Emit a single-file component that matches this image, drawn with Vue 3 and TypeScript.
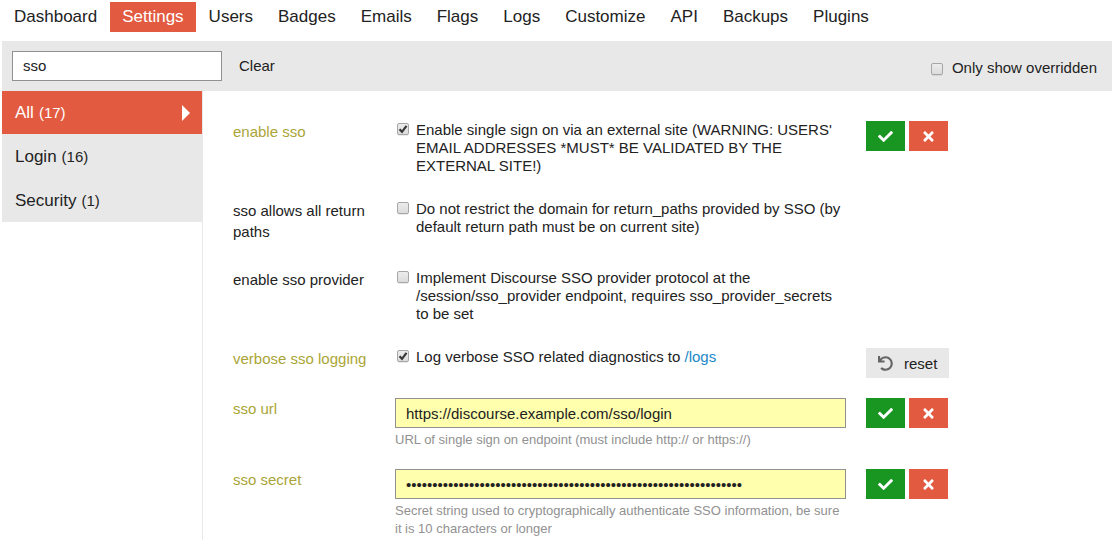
<script setup lang="ts">
import { computed, ref } from 'vue'

interface Setting {
  id: string
  label: string
  kind: 'bool' | 'text' | 'password'
  value: string | boolean
  description: string
  link?: string
  overridden: boolean
  action?: 'confirm' | 'reset'
}

const tabs = ['Dashboard', 'Settings', 'Users', 'Badges', 'Emails', 'Flags', 'Logs', 'Customize', 'API', 'Backups', 'Plugins']
const activeTab = ref('Settings')

const categories = [
  { name: 'All', count: 17 },
  { name: 'Login', count: 16 },
  { name: 'Security', count: 1 },
]
const activeCategory = ref('All')

const filter = ref('sso')
const onlyOverridden = ref(false)

const settings = ref<Setting[]>([
  {
    id: 'enable_sso',
    label: 'enable sso',
    kind: 'bool',
    value: true,
    description: "Enable single sign on via an external site (WARNING: USERS' EMAIL ADDRESSES *MUST* BE VALIDATED BY THE EXTERNAL SITE!)",
    overridden: true,
    action: 'confirm',
  },
  {
    id: 'sso_allows_all_return_paths',
    label: 'sso allows all return paths',
    kind: 'bool',
    value: false,
    description: 'Do not restrict the domain for return_paths provided by SSO (by default return path must be on current site)',
    overridden: false,
  },
  {
    id: 'enable_sso_provider',
    label: 'enable sso provider',
    kind: 'bool',
    value: false,
    description: 'Implement Discourse SSO provider protocol at the /session/sso_provider endpoint, requires sso_provider_secrets to be set',
    overridden: false,
  },
  {
    id: 'verbose_sso_logging',
    label: 'verbose sso logging',
    kind: 'bool',
    value: true,
    description: 'Log verbose SSO related diagnostics to ',
    link: '/logs',
    overridden: true,
    action: 'reset',
  },
  {
    id: 'sso_url',
    label: 'sso url',
    kind: 'text',
    value: 'https://discourse.example.com/sso/login',
    description: 'URL of single sign on endpoint (must include http:// or https://)',
    overridden: true,
    action: 'confirm',
  },
  {
    id: 'sso_secret',
    label: 'sso secret',
    kind: 'password',
    value: '0'.repeat(64),
    description: 'Secret string used to cryptographically authenticate SSO information, be sure it is 10 characters or longer',
    overridden: true,
    action: 'confirm',
  },
])

const visible = computed(() => settings.value.filter((s) => !onlyOverridden.value || s.overridden))
</script>

<template>
  <div class="admin">
    <nav class="tabs">
      <a v-for="tab in tabs" :key="tab" href="#" :class="{ active: tab === activeTab }" @click.prevent="activeTab = tab">{{ tab }}</a>
    </nav>

    <div class="filter-bar">
      <input v-model="filter" class="text-input search" type="text" aria-label="Filter settings" />
      <button class="clear" type="button" @click="filter = ''">Clear</button>
      <label class="overridden-toggle">
        <input v-model="onlyOverridden" class="check" type="checkbox" />
        <span>Only show overridden</span>
      </label>
    </div>

    <div class="body">
      <aside class="sidebar">
        <ul>
          <li v-for="c in categories" :key="c.name">
            <a href="#" :class="{ active: c.name === activeCategory }" @click.prevent="activeCategory = c.name">
              {{ c.name }} <span class="count">({{ c.count }})</span>
            </a>
          </li>
        </ul>
      </aside>

      <main class="settings">
        <section v-for="s in visible" :key="s.id" class="setting" :class="{ changed: s.overridden }">
          <label class="name" :for="s.id">{{ s.label }}</label>

          <div v-if="s.kind === 'bool'" class="value bool-value">
            <input :id="s.id" v-model="s.value" class="check" type="checkbox" />
            <p>{{ s.description }}<a v-if="s.link" :href="s.link">{{ s.link }}</a></p>
          </div>
          <div v-else class="value">
            <input :id="s.id" v-model="s.value" class="text-input" :type="s.kind" autocomplete="off" />
            <p class="hint">{{ s.description }}</p>
          </div>

          <div class="actions">
            <template v-if="s.action === 'confirm'">
              <button class="btn ok" type="button" aria-label="Save">
                <svg viewBox="0 0 512 512" aria-hidden="true"><path d="M173.898 439.404l-166.400-166.400c-9.997-9.997-9.997-26.206 0-36.204l36.203-36.204c9.997-9.998 26.207-9.998 36.204 0L192 312.690 432.095 72.596c9.997-9.997 26.207-9.997 36.204 0l36.203 36.204c9.997 9.997 9.997 26.206 0 36.204l-294.400 294.401c-9.998 9.997-26.207 9.997-36.204-.001z" /></svg>
              </button>
              <button class="btn cancel" type="button" aria-label="Cancel">
                <svg viewBox="-80 0 512 512" aria-hidden="true"><path d="M242.720 256l100.070-100.070c12.280-12.280 12.280-32.190 0-44.480l-22.240-22.240c-12.280-12.280-32.190-12.280-44.480 0L176 189.280 75.930 89.210c-12.280-12.280-32.190-12.280-44.480 0L9.210 111.450c-12.280 12.280-12.280 32.190 0 44.480L109.280 256 9.210 356.070c-12.280 12.280-12.280 32.190 0 44.480l22.240 22.240c12.280 12.280 32.200 12.280 44.480 0L176 322.720l100.070 100.070c12.280 12.280 32.200 12.280 44.480 0l22.240-22.240c12.280-12.280 12.280-32.190 0-44.480L242.720 256z" /></svg>
              </button>
            </template>
            <button v-else-if="s.action === 'reset'" class="btn reset" type="button">
              <svg viewBox="0 0 512 512" aria-hidden="true"><path d="M212.333 224.333H12c-6.627 0-12-5.373-12-12V12C0 5.373 5.373 0 12 0h48c6.627 0 12 5.373 12 12v78.112C117.773 39.279 184.260 7.470 258.175 8.007c136.906.994 246.448 111.623 246.157 248.532C504.041 393.258 393.120 504 256.333 504c-64.089 0-122.496-24.313-166.510-64.215-5.099-4.622-5.334-12.554-.467-17.420l33.967-33.967c4.474-4.474 11.662-4.717 16.401-.525C170.760 415.336 211.580 432 256.333 432c97.268 0 176-78.716 176-176 0-97.267-78.716-176-176-176-58.496 0-110.280 28.476-142.274 72.333h98.274c6.627 0 12 5.373 12 12v48c0 6.627-5.373 12-12 12z" /></svg>
              <span>reset</span>
            </button>
          </div>
        </section>
      </main>
    </div>
  </div>
</template>

<style>
body {
  background: #fff;
}
</style>

<style scoped>
.admin {
  box-sizing: border-box;
  display: flex;
  flex-direction: column;
  height: 100vh;
  overflow: hidden;
  padding: 2px 2px 0;
  color: #222;
  font-family: "Liberation Sans", Arial, sans-serif;
  font-size: 15px;
  line-height: 18px;
}

.tabs {
  display: flex;
  gap: 1px;
  margin-bottom: 9px;
}

.tabs a {
  padding: 0 12px;
  color: #222;
  font-size: 17px;
  line-height: 30px;
  text-decoration: none;
}

.tabs a.active {
  background: #e25a40;
  color: #fff;
}

.filter-bar {
  display: flex;
  align-items: center;
  padding: 10px 15px 10px 10px;
  background: #e8e8e8;
}

.text-input {
  box-sizing: border-box;
  display: block;
  width: 100%;
  height: 30px;
  margin: 0;
  padding: 0 10px;
  border: 1px solid #919191;
  border-radius: 0;
  background: #fff;
  color: #222;
  font: inherit;
}

.search {
  width: 210px;
  padding-bottom: 2px;
}

.clear {
  margin-left: 17px;
  padding: 0;
  border: 0;
  background: none;
  color: #222;
  font: inherit;
}

.overridden-toggle {
  display: flex;
  align-items: center;
  gap: 9px;
  margin-left: auto;
  padding-top: 4px;
}

.overridden-toggle .check {
  margin-top: 2px;
}

.check {
  appearance: none;
  flex: none;
  box-sizing: border-box;
  width: 12px;
  height: 12px;
  margin: 0;
  border: 1px solid #a6a6a6;
  border-radius: 2px;
  background: linear-gradient(#ececec, #dcdcdc);
  box-shadow: 0 1px 0 rgba(0, 0, 0, 0.08);
}

.check:checked {
  background: url("data:image/svg+xml,%3Csvg xmlns='http://www.w3.org/2000/svg' viewBox='0 0 10 10'%3E%3Cpath d='M1.500 5.300 4 7.800 8.500 1.800' fill='none' stroke='%23383838' stroke-width='2.200'/%3E%3C/svg%3E") center / 10px 10px no-repeat, linear-gradient(#ececec, #dcdcdc);
}

.body {
  display: flex;
  flex: 1;
  min-height: 0;
}

.sidebar {
  flex: none;
  width: 200px;
  border-right: 1px solid #e8e8e8;
}

.sidebar ul {
  margin: 0;
  padding: 0;
  background: #e8e8e8;
  list-style: none;
}

.sidebar li + li {
  border-top: 1px solid #e8e8e8;
}

.sidebar a {
  display: flex;
  align-items: baseline;
  gap: 5px;
  padding: 0 12px 0 13px;
  color: #222;
  font-size: 17px;
  line-height: 43px;
  text-decoration: none;
}

.sidebar .count {
  font-size: 15px;
}

.sidebar a.active {
  background: #e25a40;
  color: #fff;
}

.sidebar a.active::after {
  content: "";
  align-self: center;
  margin-left: auto;
  border: 8px solid transparent;
  border-right: 0;
  border-left-color: #fff;
}

.settings {
  flex: 1;
  min-width: 0;
  padding: 30px 0 0 30px;
}

.setting {
  display: grid;
  grid-template-columns: 162px minmax(0, 471fr) minmax(0, 246fr);
  align-items: start;
  margin-bottom: 20px;
}

.name {
  padding: 0 20px 7px 0;
  line-height: 21px;
}

.value {
  margin-right: 20px;
}

.changed .name {
  color: #aaa536;
}

.changed .text-input {
  background: #ffffae;
}

.bool-value {
  display: flex;
  gap: 7px;
  padding-left: 2px;
}

.bool-value .check {
  margin-top: 2px;
}

.bool-value p {
  margin: 0 0 5px;
}

.bool-value a {
  color: #2088c8;
  text-decoration: none;
}

.hint {
  margin: 3px 0 0;
  color: #919191;
  font-size: 13px;
}

.actions {
  display: flex;
  gap: 4px;
}

.btn {
  display: flex;
  align-items: center;
  justify-content: center;
  height: 30px;
  padding: 1px 12px 0;
  border: 0;
  color: #fff;
  font: inherit;
}

.btn svg {
  flex: none;
  width: 15px;
  height: 15px;
  fill: currentColor;
}

.ok {
  background: #199622;
}

.cancel {
  background: #e25a40;
}

.reset {
  gap: 11px;
  background: #e8e8e8;
  color: #222;
}

.reset svg {
  fill: #646464;
}
</style>
